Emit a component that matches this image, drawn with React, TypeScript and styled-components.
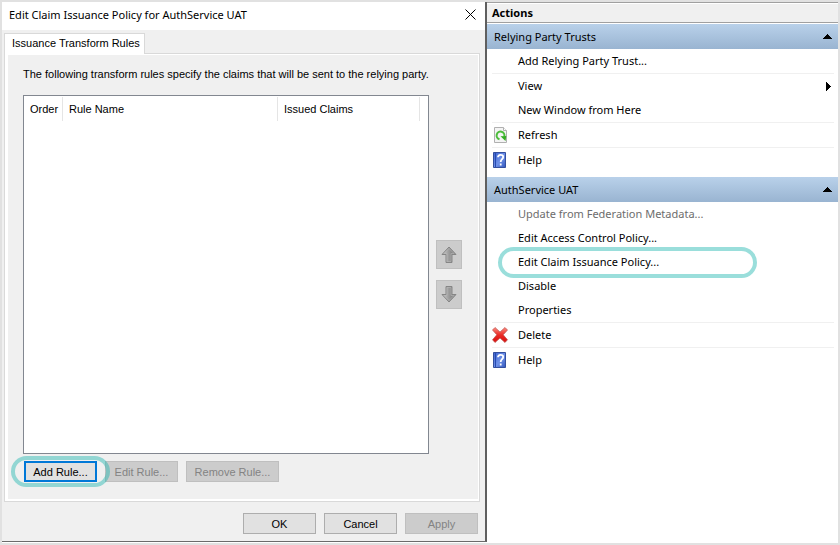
import React from "react";
import styled, { createGlobalStyle, css } from "styled-components";

const ui = `"Noto Sans", "Open Sans", sans-serif`;
const classic = `"Liberation Sans", Arial, sans-serif`;

const GlobalStyle = createGlobalStyle`
  *, *::before, *::after { box-sizing: border-box; }
  body { margin: 0; background: #e1e1e1; color: #000; }
  button { margin: 0; padding: 0; color: inherit; font: inherit; }
`;

const Screen = styled.main`
  display: grid;
  grid-template-columns: 485fr 351fr;
  min-height: 100vh;
  border: 2px solid #e1e1e1;
  background: #fff;
`;

const Dialog = styled.section`
  display: flex;
  flex-direction: column;
  min-width: 0;
  margin-bottom: 1px;
  border-right: 2px solid #5f5f5f;
  border-bottom: 1px solid #6b6b6b;
  background: #f0f0f0;
  font: 11px/16px ${classic};
`;

const TitleBar = styled.header`
  display: flex;
  align-items: center;
  justify-content: space-between;
  height: 28px;
  padding: 0 9px 3px 7px;
  background: #fff;
`;

const Title = styled.h1`
  margin: 0;
  font: 400 11px/16px ${ui};
`;

const CloseButton = styled.button`
  display: flex;
  border: 0;
  background: none;
`;

const TabList = styled.div`
  display: flex;
  padding: 3px 2px 0;
`;

const Tab = styled.button`
  height: 21px;
  margin-bottom: -1px;
  padding: 0 4px 2px 7px;
  border: 1px solid #d9d9d9;
  border-bottom: 0;
  background: #fff;
  position: relative;
`;

const TabPanel = styled.div`
  display: flex;
  flex: 1;
  flex-direction: column;
  margin: 0 5px 0 2px;
  border: 1px solid #d9d9d9;
  background: #fff;
  padding: 1px 1px 2px 3px;
`;

const PanelBody = styled.div`
  display: flex;
  flex: 1;
  flex-direction: column;
  padding: 11px 16px 17px 15px;
  background: #f0f0f0;
`;

const Description = styled.p`
  margin: 0 0 13px;
`;

const RulesArea = styled.div`
  display: grid;
  grid-template-columns: 1fr 26px;
  flex: 1;
  gap: 7px;
`;

const ListBox = styled.div`
  padding-top: 1px;
  border: 1px solid #828790;
  background: #fff;
`;

const RulesTable = styled.table`
  width: 100%;
  border-collapse: separate;
  border-spacing: 0;
  table-layout: fixed;
`;

const Column = styled.th<{ $width?: number }>`
  width: ${(p) => (p.$width ? `${p.$width}px` : "auto")};
  height: 24px;
  padding: 0 0 0 6px;
  border-right: ${(p) => (p.$width ? "1px solid #e5e5e5" : "0")};
  font-weight: 400;
  text-align: left;
`;

const OrderButtons = styled.div`
  display: flex;
  flex-direction: column;
  justify-content: center;
  gap: 11px;
`;

const buttonFace = css`
  border: 1px solid #adadad;
  background: #e1e1e1;
  &:disabled {
    border-color: #bfbfbf;
    background: #ccc;
    color: #838383;
  }
`;

const ArrowButton = styled.button`
  ${buttonFace}
  display: flex;
  align-items: center;
  justify-content: center;
  height: 29px;
`;

const PushButton = styled.button<{ $wide?: boolean; $focused?: boolean }>`
  ${buttonFace}
  width: ${(p) => (p.$wide ? 93 : 73)}px;
  height: 21px;
  ${(p) => p.$focused && "border: 2px solid #0078d7;"}
`;

const RuleButtons = styled.div`
  display: flex;
  gap: 8px;
  padding: 7px 0 0 1px;
`;

const DialogButtons = styled.footer`
  display: flex;
  justify-content: flex-end;
  gap: 8px;
  padding: 11px 7px 7px 0;
`;

const Marked = styled.div`
  position: relative;
  display: flex;
`;

const Ring = styled.span`
  position: absolute;
  z-index: 1;
  inset: -5px -13px;
  border: 4px solid rgba(31, 182, 175, 0.45);
  border-radius: 16px;
  pointer-events: none;
`;

const ActionsPane = styled.aside`
  min-width: 0;
  border-top: 1px solid #a0a0a0;
  font: 11px/16px ${ui};
`;

const PaneTitle = styled.h2`
  height: 20px;
  margin: 0 0 1px;
  padding: 0 5px;
  border-top: 1px solid #fff;
  border-bottom: 1px solid #a0a0a0;
  background: #f0f0f0;
  font: 700 11px/18px ${ui};
`;

const Group = styled.section`
  margin-bottom: 5px;
`;

const GroupHeader = styled.button`
  display: flex;
  align-items: center;
  justify-content: space-between;
  width: 100%;
  height: 25px;
  padding: 0 6px 0 7px;
  border: 0;
  background: linear-gradient(#b9d1ea, #99b4d1);
`;

const Actions = styled.ul`
  margin: 0;
  padding: 0 4px 0 5px;
  list-style: none;
`;

const ActionItem = styled.li<{ $divided?: boolean }>`
  position: relative;
  border-top: ${(p) => (p.$divided ? "1px solid #f0f0f0" : "0")};
`;

const ActionButton = styled.button`
  display: grid;
  grid-template-columns: 18px 1fr auto;
  align-items: center;
  column-gap: 8px;
  width: 100%;
  height: 24px;
  padding-right: 2px;
  border: 0;
  background: none;
  text-align: left;
  &:disabled { color: #6d6d6d; }
`;

const IconSlot = styled.span`
  display: flex;
`;

const ClaimRing = styled.span`
  position: absolute;
  top: -3px;
  bottom: -4px;
  left: 6px;
  width: 259px;
  border: 4px solid rgba(31, 182, 175, 0.45);
  border-radius: 16px;
  pointer-events: none;
`;

const CloseIcon = () => (
  <svg width="11" height="11" viewBox="0 0 11 11" aria-hidden="true">
    <path d="M.5.5l10 10M10.5.5l-10 10" stroke="#000" fill="none" />
  </svg>
);

const Arrow = ({ down }: { down?: boolean }) => (
  <svg width="16" height="17" viewBox="0 0 16 17" aria-hidden="true">
    <defs>
      <linearGradient id={down ? "down" : "up"}>
        <stop offset="0.25" stopColor="#b4b4b4" />
        <stop offset="0.7" stopColor="#888" />
      </linearGradient>
    </defs>
    <path
      d={down ? "M5 .5h6v8h4L8 16 1 8.500h4z" : "M8 1l7 7.500h-4v8H5v-8H1z"}
      fill={`url(#${down ? "down" : "up"})`}
      stroke="#858585"
    />
    <path
      d={down ? "M6 1.500h4v8h3L8 14.500 3 9.500h3z" : "M8 2.500l5 5h-3v8H6v-8H3z"}
      fill="none"
      stroke="#b8b8b8"
      strokeWidth=".6"
    />
  </svg>
);

const CollapseIcon = () => (
  <svg width="9" height="5" viewBox="0 0 9 5" shapeRendering="crispEdges" aria-hidden="true">
    <path d="M4 0h1v1h1v1h1v1h1v1h1v1H0V4h1V3h1V2h1V1h1z" />
  </svg>
);

const SubmenuIcon = () => (
  <svg width="6" height="9" viewBox="0 0 6 9" shapeRendering="crispEdges" aria-hidden="true">
    <path d="M0 0h1v1h1v1h1v1h1v1h1v1H4v1H3v1H2v1H1v1H0z" />
  </svg>
);

const RefreshIcon = () => (
  <svg width="18" height="16" viewBox="0 0 18 16" aria-hidden="true">
    <path d="M2.500.5h9l3 3v12h-12z" fill="#f4f4f4" stroke="#b0b0b0" />
    <path d="M11.500.5v3h3" fill="#fff" stroke="#b0b0b0" />
    <path d="M7.500 12.300A3.900 3.900 0 1 1 12.300 9.500" fill="none" stroke="#4cbd3c" strokeWidth="2" />
    <path d="M8.500 9.200l5.800-.2-.8 5z" fill="#35ad25" />
  </svg>
);

const HelpIcon = () => (
  <svg width="18" height="16" viewBox="0 0 18 16" aria-hidden="true">
    <defs>
      <linearGradient id="book" x2="1" y2="1">
        <stop stopColor="#3c62cf" />
        <stop offset=".55" stopColor="#6f91e8" />
        <stop offset="1" stopColor="#3156bd" />
      </linearGradient>
    </defs>
    <path d="M1.500.5h12v15h-12z" fill="url(#book)" stroke="#344f9e" />
    <path d="M3.500 1v14" stroke="#274aae" />
    <path d="M6 5.300C6 2 11.200 2 11.200 5c0 2.200-2.500 2.300-2.500 5M8.700 11.500v2" fill="none" stroke="#fff" strokeWidth="1.800" />
  </svg>
);

const DeleteIcon = () => (
  <svg width="18" height="16" viewBox="0 0 18 16" aria-hidden="true">
    <defs>
      <linearGradient id="cross" x2="0" y2="1">
        <stop stopColor="#ff8b80" />
        <stop offset=".5" stopColor="#e92b25" />
        <stop offset="1" stopColor="#d90e0e" />
      </linearGradient>
    </defs>
    <path
      d="M.5 3L3 .5 8 5 13 .5 15.500 3 11.200 7.800l4.300 5-2.500 2.700L8 11 3 15.500.5 12.800l4.300-5z"
      fill="url(#cross)"
      stroke="#b9544f"
      strokeWidth=".7"
      strokeLinejoin="round"
    />
  </svg>
);

type Action = {
  label: string;
  icon?: React.ReactNode;
  divided?: boolean;
  submenu?: boolean;
  disabled?: boolean;
  marked?: boolean;
};

const groups: { title: string; actions: Action[] }[] = [
  {
    title: "Relying Party Trusts",
    actions: [
      { label: "Add Relying Party Trust..." },
      { label: "View", divided: true, submenu: true },
      { label: "New Window from Here" },
      { label: "Refresh", divided: true, icon: <RefreshIcon /> },
      { label: "Help", divided: true, icon: <HelpIcon /> },
    ],
  },
  {
    title: "AuthService UAT",
    actions: [
      { label: "Update from Federation Metadata...", disabled: true },
      { label: "Edit Access Control Policy..." },
      { label: "Edit Claim Issuance Policy...", marked: true },
      { label: "Disable" },
      { label: "Properties" },
      { label: "Delete", divided: true, icon: <DeleteIcon /> },
      { label: "Help", divided: true, icon: <HelpIcon /> },
    ],
  },
];

export default function App() {
  return (
    <>
      <GlobalStyle />
      <Screen>
        <Dialog aria-labelledby="dialog-title">
          <TitleBar>
            <Title id="dialog-title">Edit Claim Issuance Policy for AuthService UAT</Title>
            <CloseButton aria-label="Close"><CloseIcon /></CloseButton>
          </TitleBar>
          <TabList role="tablist">
            <Tab role="tab" id="rules-tab" aria-selected="true" aria-controls="rules-panel">
              Issuance Transform Rules
            </Tab>
          </TabList>
          <TabPanel role="tabpanel" id="rules-panel" aria-labelledby="rules-tab">
            <PanelBody>
              <Description>
                The following transform rules specify the claims that will be sent to the relying party.
              </Description>
              <RulesArea>
                <ListBox>
                  <RulesTable>
                    <thead>
                      <tr>
                        <Column scope="col" $width={39}>Order</Column>
                        <Column scope="col" $width={215}>Rule Name</Column>
                        <Column scope="col" $width={142}>Issued Claims</Column>
                        <Column as="td" />
                      </tr>
                    </thead>
                  </RulesTable>
                </ListBox>
                <OrderButtons>
                  <ArrowButton disabled aria-label="Move up"><Arrow /></ArrowButton>
                  <ArrowButton disabled aria-label="Move down"><Arrow down /></ArrowButton>
                </OrderButtons>
              </RulesArea>
              <RuleButtons>
                <Marked>
                  <PushButton $focused>Add Rule...</PushButton>
                  <Ring />
                </Marked>
                <PushButton disabled>Edit Rule...</PushButton>
                <PushButton disabled $wide>Remove Rule...</PushButton>
              </RuleButtons>
            </PanelBody>
          </TabPanel>
          <DialogButtons>
            <PushButton>OK</PushButton>
            <PushButton>Cancel</PushButton>
            <PushButton disabled>Apply</PushButton>
          </DialogButtons>
        </Dialog>
        <ActionsPane aria-labelledby="actions-title">
          <PaneTitle id="actions-title">Actions</PaneTitle>
          {groups.map((group) => (
            <Group key={group.title}>
              <GroupHeader aria-expanded="true">
                {group.title}
                <CollapseIcon />
              </GroupHeader>
              <Actions>
                {group.actions.map((action) => (
                  <ActionItem key={action.label} $divided={action.divided}>
                    <ActionButton disabled={action.disabled}>
                      <IconSlot>{action.icon}</IconSlot>
                      {action.label}
                      {action.submenu && <SubmenuIcon />}
                    </ActionButton>
                    {action.marked && <ClaimRing />}
                  </ActionItem>
                ))}
              </Actions>
            </Group>
          ))}
        </ActionsPane>
      </Screen>
    </>
  );
}
